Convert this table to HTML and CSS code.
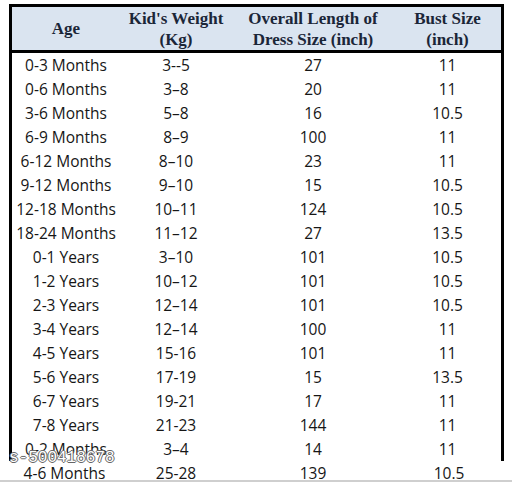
FILE: index.html
```html
<!DOCTYPE html>
<html lang="en">
  <head>
    <meta charset="UTF-8">
    <meta name="viewport" content="width=device-width, initial-scale=1.0">
    <title>Kids Dress Size Chart</title>
    <link rel="stylesheet" href="styles.css">
  </head>
  <body>
    <div class="sheet">
      <table class="chart">
        <colgroup>
          <col class="c-age">
          <col class="c-weight">
          <col class="c-length">
          <col class="c-bust">
        </colgroup>
        <thead>
          <tr>
            <th>Age</th>
            <th>Kid's Weight<br>(Kg)</th>
            <th>Overall Length of<br>Dress Size (inch)</th>
            <th>Bust Size<br>(inch)</th>
          </tr>
        </thead>
        <tbody>
          <tr><td>0-3 Months</td><td>3--5</td><td>27</td><td>11</td></tr>
          <tr><td>0-6 Months</td><td>3–8</td><td>20</td><td>11</td></tr>
          <tr><td>3-6 Months</td><td>5–8</td><td>16</td><td>10.5</td></tr>
          <tr><td>6-9 Months</td><td>8–9</td><td>100</td><td>11</td></tr>
          <tr><td>6-12 Months</td><td>8–10</td><td>23</td><td>11</td></tr>
          <tr><td>9-12 Months</td><td>9–10</td><td>15</td><td>10.5</td></tr>
          <tr><td>12-18 Months</td><td>10–11</td><td>124</td><td>10.5</td></tr>
          <tr><td>18-24 Months</td><td>11–12</td><td>27</td><td>13.5</td></tr>
          <tr><td>0-1 Years</td><td>3–10</td><td>101</td><td>10.5</td></tr>
          <tr><td>1-2 Years</td><td>10–12</td><td>101</td><td>10.5</td></tr>
          <tr><td>2-3 Years</td><td>12–14</td><td>101</td><td>10.5</td></tr>
          <tr><td>3-4 Years</td><td>12–14</td><td>100</td><td>11</td></tr>
          <tr><td>4-5 Years</td><td>15-16</td><td>101</td><td>11</td></tr>
          <tr><td>5-6 Years</td><td>17-19</td><td>15</td><td>13.5</td></tr>
          <tr><td>6-7 Years</td><td>19-21</td><td>17</td><td>11</td></tr>
          <tr><td>7-8 Years</td><td>21-23</td><td>144</td><td>11</td></tr>
          <tr><td>0-2 Months</td><td>3–4</td><td>14</td><td>11</td></tr>
          <tr class="cut"><td>4-6 Months</td><td>25-28</td><td>139</td><td>10.5</td></tr>
        </tbody>
      </table>
      <span class="stamp">s-500418678</span>
    </div>
  </body>
</html>
```

FILE: styles.css
```css
html {
  font-family: "Open Sans", sans-serif;
}

body {
  margin: 0;
  background-color: #fff;
}

.sheet {
  position: relative;
  height: 482px;
  padding-top: 4px;
  box-sizing: border-box;
  overflow: hidden;
  border-bottom: 2px solid #cfcfcf;
}

.chart {
  margin-left: 9px;
  width: 495px;
  table-layout: fixed;
  border-collapse: separate;
  border-spacing: 0;
}

.c-age {
  width: 111px;
}

.c-weight {
  width: 112px;
}

.c-length {
  width: 162px;
}

.chart th {
  height: 43px;
  padding: 0;
  background-color: #dae4f0;
  border-top: 3px solid #000;
  border-bottom: 3px solid #000;
  font-family: "Liberation Serif", serif;
  font-size: 17px;
  font-weight: bold;
  line-height: 21px;
  color: #1b2638;
  text-align: center;
}

.chart td {
  height: 24px;
  padding: 0;
  font-size: 15.5px;
  line-height: 24px;
  color: #161616;
  text-align: center;
  white-space: nowrap;
}

.chart th:first-child,
.chart tr:not(.cut) td:first-child {
  border-left: 3px solid #000;
}

.chart th:last-child,
.chart tr:not(.cut) td:last-child {
  border-right: 3px solid #000;
}

.stamp {
  position: absolute;
  left: 9px;
  top: 449px;
  font-family: "Liberation Mono", monospace;
  font-size: 16px;
  color: #fff;
  text-shadow: 1px 0 0 #666, -1px 0 0 #666, 0 1px 0 #666, 0 -1px 0 #666;
}
```
